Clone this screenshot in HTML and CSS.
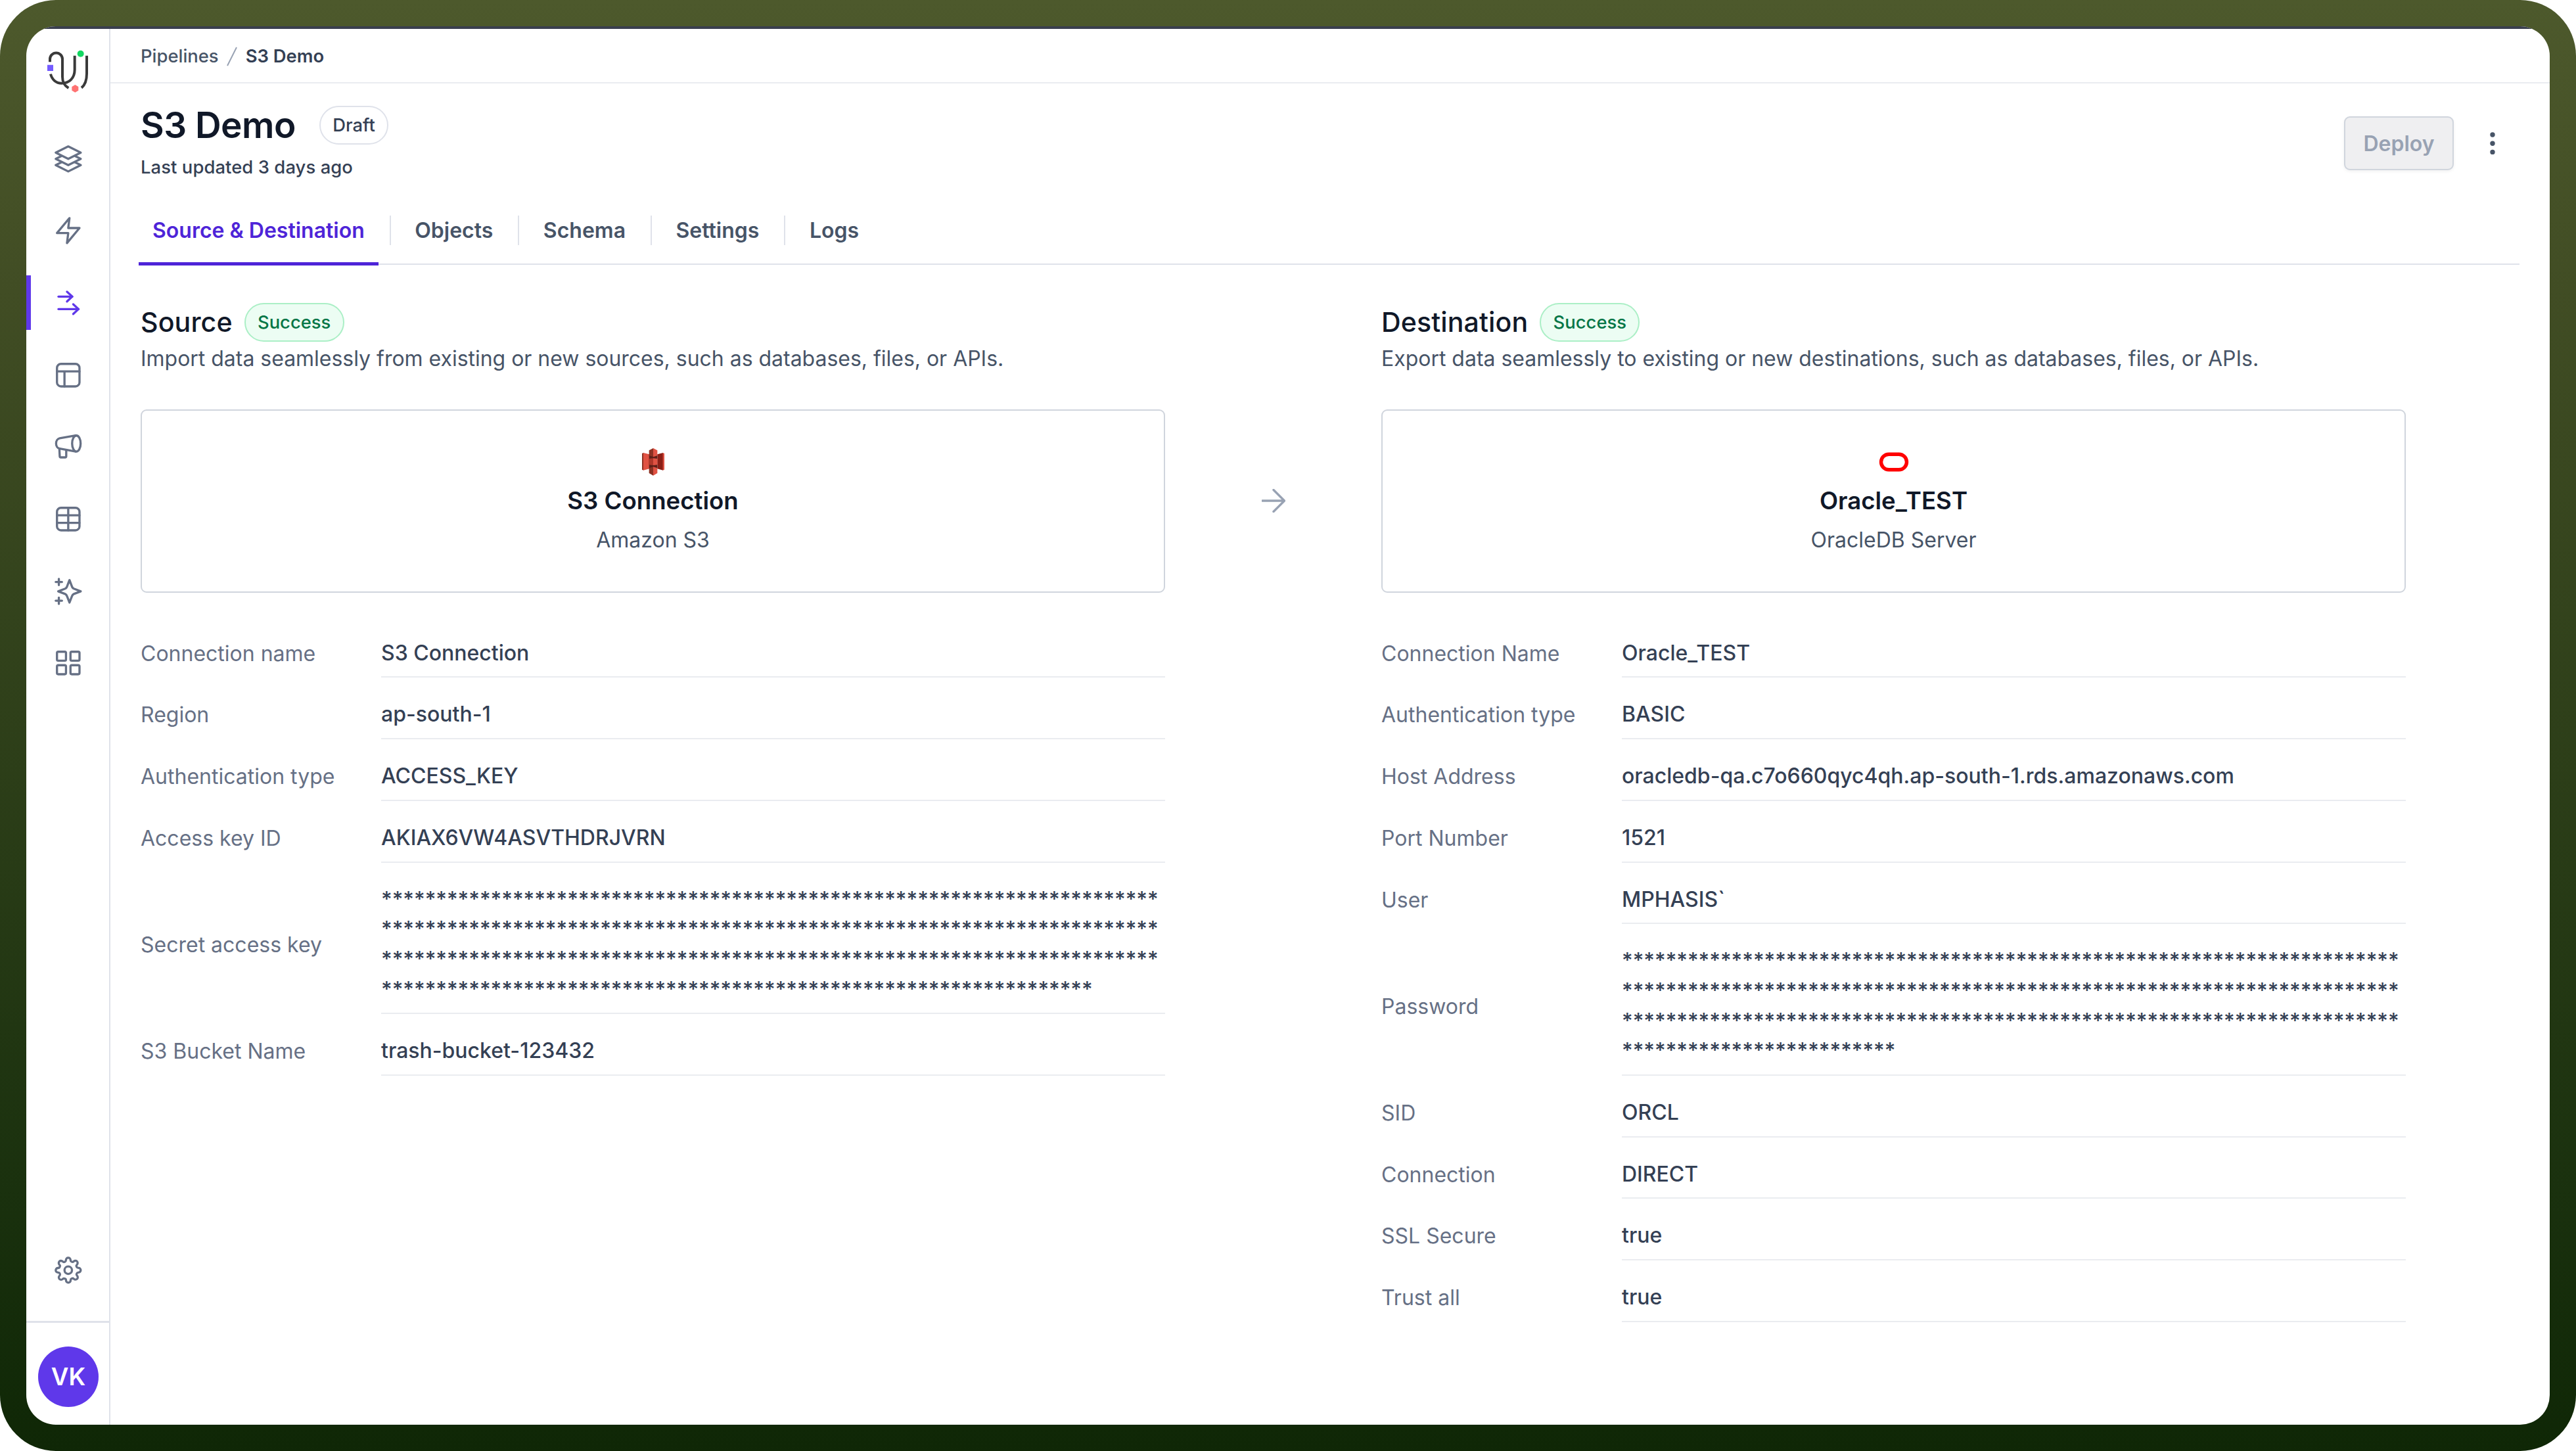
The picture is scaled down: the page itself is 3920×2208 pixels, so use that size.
FILE: index.html
```html
<!DOCTYPE html>
<html lang="en">
<head>
    <meta charset="UTF-8">
    <meta name="viewport" content="width=device-width, initial-scale=1.0">
    <title>S3 Demo</title>
    <link rel="stylesheet" href="styles.css">
</head>
<body>
    <div class="frame">
        <div class="screen">
            <div class="strip"></div>
            <div class="app">
                <aside class="sidebar">
                    <svg class="logo" viewBox="0 0 270 270" fill="none" stroke="#3a3a3a" stroke-width="12">
                        <path d="M48 91V78a28 28 0 0 1 57 0v80c0 26 8 40 28 52"/>
                        <path d="M51 146c6 26 26 42 50 42 34 0 60-22 60-62V62"/>
                        <path d="M216 62v82c0 32-8 52-24 65"/>
                        <circle cx="188" cy="53" r="15" fill="#12d861" stroke="none"/>
                        <path d="M163 195l15 9v17l-15 9-15-9v-17z" fill="#ff7373" stroke="none"/>
                        <path d="M36 104h27v28H36z" fill="#745cff" stroke="none"/>
                    </svg>
                    <nav class="nav">
                        <a href="#" class="nav-item">
                            <svg class="icon" viewBox="0 0 24 24"><path d="M12 2l10 5-10 5L2 7z"/><path d="M6.5 9.75L2 12l10 5 10-5-4.5-2.25"/><path d="M6.5 14.75L2 17l10 5 10-5-4.5-2.25"/></svg>
                        </a>
                        <a href="#" class="nav-item">
                            <svg class="icon" viewBox="0 0 24 24"><path d="M13 2L3 14h9l-1 8 10-12h-9l1-8z"/></svg>
                        </a>
                        <a href="#" class="nav-item active">
                            <svg class="icon" viewBox="0 0 24 24"><path d="M4.2 7h11"/><path d="M11 3.1L15.2 7 11 10.9"/><path d="M4.2 17h16"/><path d="M16 13.1l4.2 3.9-4.2 3.9"/></svg>
                        </a>
                        <a href="#" class="nav-item">
                            <svg class="icon" viewBox="0 0 24 24"><rect x="3" y="3" width="18" height="18" rx="3.2"/><path d="M3 9h18M9 9v12"/></svg>
                        </a>
                        <a href="#" class="nav-item">
                            <svg class="icon" viewBox="0 0 24 24"><ellipse cx="18.5" cy="9.4" rx="3.4" ry="6.4"/><path d="M18 3L5.2 5.2C3.4 5.5 2.3 7.4 2.3 9.4s1.1 3.8 2.9 4.1L18 15.8"/><path d="M4.9 13.5l.3 6.1c0 .5.4.9.9.9h3.4c.5 0 .9-.4.9-.9v-5"/></svg>
                        </a>
                        <a href="#" class="nav-item">
                            <svg class="icon" viewBox="0 0 24 24"><rect x="3" y="3" width="18" height="18" rx="3.2"/><path d="M3 9h18M3 15h18M12 3v18"/></svg>
                        </a>
                        <a href="#" class="nav-item">
                            <svg class="icon" viewBox="0 0 24 24"><path d="M4.5 22v-5M4.5 7V2M2 4.5h5M2 19.5h5"/><path d="M13 3l-1.734 4.509c-.282.733-.423 1.1-.643 1.408a3 3 0 0 1-.706.707c-.308.219-.675.36-1.408.642L4 12l4.509 1.734c.733.282 1.1.423 1.408.643.273.194.512.433.706.706.22.308.361.675.643 1.408L13 21l1.734-4.509c.282-.733.423-1.1.643-1.408.194-.273.433-.512.706-.706.308-.22.675-.361 1.408-.643L22 12l-4.509-1.734c-.733-.282-1.1-.423-1.408-.642a3 3 0 0 1-.706-.707c-.22-.308-.361-.675-.643-1.408L13 3z"/></svg>
                        </a>
                        <a href="#" class="nav-item">
                            <svg class="icon" viewBox="0 0 24 24"><rect x="3" y="3" width="7.2" height="7.2" rx="1"/><rect x="13.8" y="3" width="7.2" height="7.2" rx="1"/><rect x="3" y="13.8" width="7.2" height="7.2" rx="1"/><rect x="13.8" y="13.8" width="7.2" height="7.2" rx="1"/></svg>
                        </a>
                    </nav>
                    <a href="#" class="nav-item settings">
                        <svg class="icon" viewBox="0 0 24 24"><circle cx="12" cy="12" r="3"/><path transform="translate(1.09 1.09) scale(.909)" stroke-width="1.9" d="M19.4 15a1.65 1.65 0 0 0 .33 1.82l.06.06a2 2 0 0 1 0 2.83 2 2 0 0 1-2.83 0l-.06-.06a1.65 1.65 0 0 0-1.82-.33 1.65 1.65 0 0 0-1 1.51V21a2 2 0 0 1-2 2 2 2 0 0 1-2-2v-.09A1.65 1.65 0 0 0 9 19.4a1.65 1.65 0 0 0-1.82.33l-.06.06a2 2 0 0 1-2.83 0 2 2 0 0 1 0-2.83l.06-.06a1.65 1.65 0 0 0 .33-1.82 1.65 1.65 0 0 0-1.51-1H3a2 2 0 0 1-2-2 2 2 0 0 1 2-2h.09A1.65 1.65 0 0 0 4.6 9a1.65 1.65 0 0 0-.33-1.82l-.06-.06a2 2 0 0 1 0-2.83 2 2 0 0 1 2.83 0l.06.06a1.65 1.65 0 0 0 1.82.33H9a1.65 1.65 0 0 0 1-1.51V3a2 2 0 0 1 2-2 2 2 0 0 1 2 2v.09a1.65 1.65 0 0 0 1 1.51 1.65 1.65 0 0 0 1.82-.33l.06-.06a2 2 0 0 1 2.83 0 2 2 0 0 1 0 2.83l-.06.06a1.65 1.65 0 0 0-.33 1.82V9a1.65 1.65 0 0 0 1.51 1H21a2 2 0 0 1 2 2 2 2 0 0 1-2 2h-.09a1.65 1.65 0 0 0-1.51 1z"/></svg>
                    </a>
                    <div class="user">
                        <div class="avatar">VK</div>
                    </div>
                </aside>

                <main class="main">
                    <div class="breadcrumb">
                        <a href="#">Pipelines</a>
                        <svg class="slash" viewBox="0 0 16 30"><path d="M1 29L15 1"/></svg>
                        <span class="current">S3 Demo</span>
                    </div>

                    <div class="header">
                        <div>
                            <div class="title-row">
                                <h1>S3 Demo</h1>
                                <span class="badge">Draft</span>
                            </div>
                            <p class="updated">Last updated 3 days ago</p>
                        </div>
                        <div class="actions">
                            <button class="deploy-btn" disabled>Deploy</button>
                            <svg class="dots" viewBox="0 0 8 34"><circle cx="4" cy="4" r="3.7"/><circle cx="4" cy="17.3" r="3.7"/><circle cx="4" cy="30.5" r="3.7"/></svg>
                        </div>
                    </div>

                    <div class="tabs">
                        <a href="#" class="tab active">Source &amp; Destination</a>
                        <a href="#" class="tab">Objects</a>
                        <a href="#" class="tab">Schema</a>
                        <a href="#" class="tab">Settings</a>
                        <a href="#" class="tab">Logs</a>
                    </div>

                    <div class="columns">
                        <section>
                            <div class="section-title">
                                <h2>Source</h2>
                                <span class="badge success">Success</span>
                            </div>
                            <p class="description">Import data seamlessly from existing or new sources, such as databases, files, or APIs.</p>
                            <div class="card">
                                <svg class="card-icon" viewBox="18 30 138 138">
                                    <path fill="#8c3123" d="M36 60l7-3v80l-7-3z"/>
                                    <path fill="#e05243" d="M42 57l27 7v66l-27 7z"/>
                                    <path fill="#5e1f18" d="M68 64h38v66H68z"/>
                                    <path fill="#8c1f16" d="M106 64l26-7v80l-26-7z"/>
                                    <path fill="#e05243" d="M131 57l7 3v74l-7 3z"/>
                                    <path fill="#8c3123" d="M68 46l19-10v39l-19-5z"/>
                                    <path fill="#e05243" d="M87 36l19 10v24l-19 6z"/>
                                    <path fill="#b0372a" d="M68 84l19-2v32l-19-2z"/>
                                    <path fill="#e05243" d="M87 82l19 2v28l-19 2z"/>
                                    <path fill="#8c3123" d="M68 127l19-6v40l-19-11z"/>
                                    <path fill="#e05243" d="M87 121l19 6v23l-19 11z"/>
                                </svg>
                                <h3>S3 Connection</h3>
                                <p>Amazon S3</p>
                            </div>
                            <dl class="details">
                                <div class="row"><dt>Connection name</dt><dd>S3 Connection</dd></div>
                                <div class="row"><dt>Region</dt><dd>ap-south-1</dd></div>
                                <div class="row"><dt>Authentication type</dt><dd>ACCESS_KEY</dd></div>
                                <div class="row"><dt>Access key ID</dt><dd>AKIAX6VW4ASVTHDRJVRN</dd></div>
                                <div class="row"><dt>Secret access key</dt><dd class="secret">***********************************************************************<br>***********************************************************************<br>***********************************************************************<br>*****************************************************************</dd></div>
                                <div class="row"><dt>S3 Bucket Name</dt><dd>trash-bucket-123432</dd></div>
                            </dl>
                        </section>

                        <svg class="arrow" viewBox="0 0 36 36"><path d="M1 18h33M18 1.5L34.5 18 18 34.5"/></svg>

                        <section>
                            <div class="section-title">
                                <h2>Destination</h2>
                                <span class="badge success">Success</span>
                            </div>
                            <p class="description">Export data seamlessly to existing or new destinations, such as databases, files, or APIs.</p>
                            <div class="card">
                                <svg class="card-icon" viewBox="0 0 46 46">
                                    <rect x="3.5" y="11.2" width="39" height="23.6" rx="11.8" fill="none" stroke="#ff0000" stroke-width="5.4"/>
                                </svg>
                                <h3>Oracle_TEST</h3>
                                <p>OracleDB Server</p>
                            </div>
                            <dl class="details">
                                <div class="row"><dt>Connection Name</dt><dd>Oracle_TEST</dd></div>
                                <div class="row"><dt>Authentication type</dt><dd>BASIC</dd></div>
                                <div class="row"><dt>Host Address</dt><dd>oracledb-qa.c7o660qyc4qh.ap-south-1.rds.amazonaws.com</dd></div>
                                <div class="row"><dt>Port Number</dt><dd>1521</dd></div>
                                <div class="row"><dt>User</dt><dd>MPHASIS`</dd></div>
                                <div class="row"><dt>Password</dt><dd class="secret">***********************************************************************<br>***********************************************************************<br>***********************************************************************<br>*************************</dd></div>
                                <div class="row"><dt>SID</dt><dd>ORCL</dd></div>
                                <div class="row"><dt>Connection</dt><dd>DIRECT</dd></div>
                                <div class="row"><dt>SSL Secure</dt><dd>true</dd></div>
                                <div class="row"><dt>Trust all</dt><dd>true</dd></div>
                            </dl>
                        </section>
                    </div>
                </main>
            </div>
        </div>
    </div>
</body>
</html>
```
FILE: styles.css
```css
* {
    box-sizing: border-box;
}
body {
    margin: 0;
    background-color: white;
    font-family: Inter, "Liberation Sans", sans-serif;
    font-size: 32px;
    line-height: 45.7px;
    color: #344054;
}
h1, h2, h3, p, dl, dd {
    margin: 0;
}
a {
    color: inherit;
    text-decoration: none;
}
.frame {
    width: 3920px;
    height: 2208px;
    padding: 40px;
    border-radius: 85px;
    background: linear-gradient(#4d592c, #414d24 20%, #1a310e 82%, #0f2706);
}
.screen {
    display: flex;
    flex-direction: column;
    height: 100%;
    border-radius: 45px;
    overflow: hidden;
    background-color: white;
}
.strip {
    flex: none;
    height: 4px;
    background-color: #3a3f4e;
}
.app {
    display: flex;
    flex: 1;
}

/* sidebar */
.sidebar {
    display: flex;
    flex-direction: column;
    width: 128px;
    border-right: 2px solid #dfe2ea;
}
.logo {
    width: 90px;
    height: 90px;
    margin: 20px 0 0 20px;
}
.nav {
    margin-top: 46px;
}
.nav-item {
    display: flex;
    align-items: center;
    justify-content: center;
    height: 82.7px;
    margin-bottom: 27px;
    padding-left: 1px;
    color: #667085;
}
.nav-item.active {
    padding-right: 7px;
    border-left: 7px solid #5f38ea;
    color: #5f38ea;
}
.icon {
    width: 45.7px;
    height: 45.7px;
    fill: none;
    stroke: currentColor;
    stroke-width: 1.75;
    stroke-linecap: round;
    stroke-linejoin: round;
}
.nav-item.settings {
    margin: auto 0 36px;
}
.user {
    display: flex;
    justify-content: center;
    height: 158px;
    padding-top: 36px;
    padding-left: 2px;
    border-top: 3px solid #dfe2ea;
}
.avatar {
    width: 92px;
    height: 92px;
    border-radius: 50%;
    background-color: #5f38ea;
    color: white;
    font-size: 36.6px;
    font-weight: 600;
    line-height: 92px;
    text-align: center;
}

/* page header */
.main {
    flex: 1;
}
.breadcrumb {
    display: flex;
    align-items: center;
    height: 83px;
    padding-top: 2px;
    padding-left: 46px;
    border-bottom: 2px solid #eaecf0;
    font-size: 27.4px;
    font-weight: 500;
    color: #475467;
}
.slash {
    width: 16px;
    height: 30px;
    margin: 0 13px 0 12px;
    fill: none;
    stroke: #98a2b3;
    stroke-width: 2;
}
.current {
    font-weight: 600;
    color: #344054;
}
.header {
    display: flex;
    justify-content: space-between;
    padding: 26.5px 83px 0 46px;
}
.title-row {
    display: flex;
    align-items: center;
    height: 73px;
    gap: 36px;
}
h1 {
    font-size: 54.9px;
    font-weight: 600;
    letter-spacing: -0.5px;
    line-height: 73px;
    color: #101828;
}
.badge {
    height: 59px;
    padding: 0 18.3px;
    border: 2px solid #dfe2ea;
    border-radius: 30px;
    font-size: 27.4px;
    font-weight: 500;
    line-height: 55px;
}
.badge.success {
    border-color: #abefc6;
    background-color: #ecfdf3;
    color: #067647;
}
.updated {
    margin-top: 7px;
    font-size: 27.4px;
    font-weight: 500;
    letter-spacing: 0.08px;
    line-height: 41px;
}
.actions {
    display: flex;
    align-items: center;
    gap: 55px;
    height: 82px;
    margin-top: 23.5px;
}
.deploy-btn {
    width: 167px;
    height: 82px;
    padding: 0;
    border: 2px solid #d0d5dd;
    border-radius: 9px;
    background-color: #efeff1;
    box-shadow: 0 2px 5px rgba(16, 24, 40, 0.06);
    color: #98a2b3;
    font-family: inherit;
    font-size: 32px;
    font-weight: 600;
}
.dots {
    width: 8px;
    height: 34px;
    fill: #475467;
}

/* tabs */
.tabs {
    display: flex;
    height: 75px;
    margin: 53.5px 46px 0 43px;
    border-bottom: 2px solid #dfe2ea;
}
.tab {
    display: flex;
    height: 76px;
    padding: 0 21px;
    font-weight: 600;
    color: #475467;
}
.tab.active {
    border-bottom: 5px solid #4e24d8;
    color: #4e24d8;
}
.tab + .tab::before {
    content: "";
    width: 2px;
    height: 45px;
    margin-right: 36.5px;
    margin-left: -4px;
    background-color: #dfe2ea;
}

/* source and destination */
.columns {
    display: grid;
    grid-template-columns: 1559px 329px 1559px;
    margin: 57.5px 0 0 46px;
}
.section-title {
    display: flex;
    align-items: center;
    height: 59px;
    gap: 18px;
}
h2 {
    padding-top: 1px;
    font-size: 41.1px;
    font-weight: 500;
    letter-spacing: 0.1px;
    color: #101828;
}
.description {
    margin-top: 3.5px;
    letter-spacing: -0.02px;
    color: #475467;
}
.card {
    display: flex;
    flex-direction: column;
    align-items: center;
    justify-content: center;
    gap: 9px;
    height: 279px;
    margin-top: 54px;
    border: 2px solid #d0d5dd;
    border-radius: 9px;
    color: #475467;
}
.card-icon {
    width: 46px;
    height: 46px;
}
h3 {
    font-size: 36.6px;
    font-weight: 600;
    line-height: 55px;
    color: #101828;
}
.arrow {
    width: 36px;
    height: 36px;
    margin-top: 283px;
    justify-self: center;
    fill: none;
    stroke: #98a2b3;
    stroke-width: 3.4;
    stroke-linecap: round;
    stroke-linejoin: round;
}
.details {
    margin-top: 36px;
}
.row {
    display: flex;
    align-items: center;
    padding-top: 33px;
}
dt {
    width: 366px;
    padding-bottom: 13px;
    color: #667085;
}
dd {
    flex: 1;
    padding-bottom: 13px;
    border-bottom: 2px solid #eaecf0;
    font-weight: 500;
}
.secret {
    white-space: nowrap;
}
```
